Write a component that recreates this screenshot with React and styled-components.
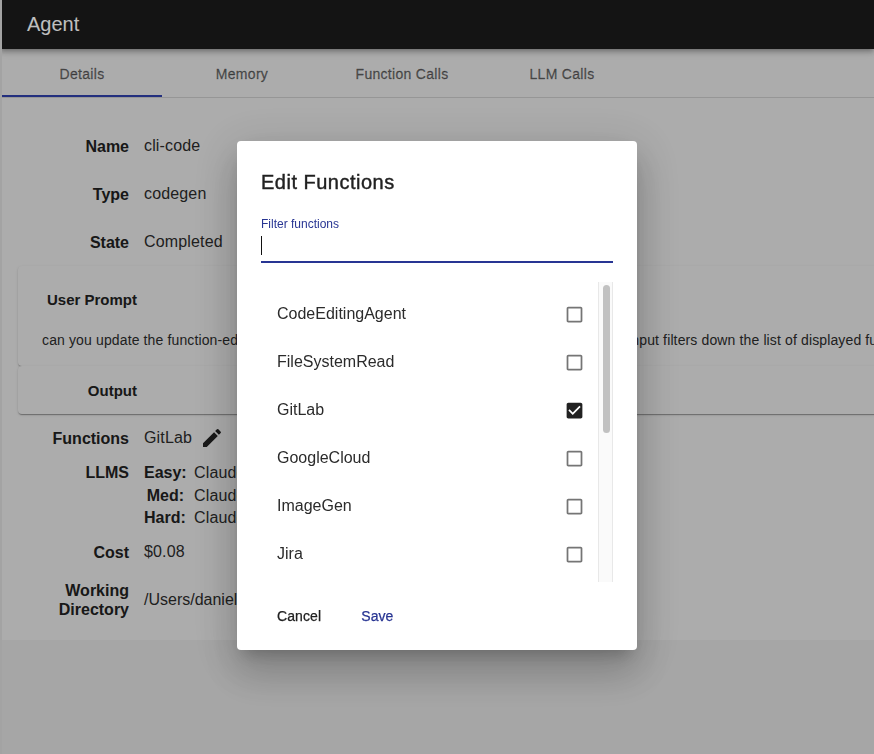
import React, { useState } from "react";
import styled, { createGlobalStyle } from "styled-components";

const FUNCTIONS = [
  "CodeEditingAgent",
  "FileSystemRead",
  "GitLab",
  "GoogleCloud",
  "ImageGen",
  "Jira",
  "Perplexity",
  "PublicWeb",
  "SlackAPI",
  "SupportRequest",
  "TypescriptTools",
  "UtilFunctions",
];

const PROMPT =
  "can you update the function-editing dialog so that it has a search box at the top and that text input filters down the list of displayed functions as the user types";

const GlobalStyle = createGlobalStyle`
  html, body {
    margin: 0;
    height: 100%;
    overflow: hidden;
    background: #dedede;
    font-family: "Liberation Sans", Arial, sans-serif;
    color: #212121;
  }
  * { box-sizing: border-box; }
`;

const Page = styled.div`
  width: 874px;
  height: 754px;
  overflow: hidden;
  border-left: 2px solid #dadada;
`;

const AppBar = styled.header`
  height: 49px;
  margin-left: -2px;
  padding-left: 27px;
  display: flex;
  align-items: center;
  background: #1b1b1b;
  color: #fff;
  font-size: 20px;
  box-shadow: 0 2px 4px -1px rgba(0, 0, 0, 0.2), 0 4px 5px 0 rgba(0, 0, 0, 0.14),
    0 1px 10px 0 rgba(0, 0, 0, 0.12);
  position: relative;

  &::before {
    content: "";
    position: absolute;
    top: 0;
    bottom: 0;
    left: 1px;
    width: 1px;
    background: #e6e6e6;
  }
`;

const TabBar = styled.nav`
  display: flex;
  height: 49px;
  background: #e6e6e6;
  border-bottom: 1px solid #c8c8c8;
`;

const Tab = styled.div`
  width: 160px;
  height: 48px;
  padding-top: 4px;
  display: flex;
  align-items: center;
  justify-content: center;
  font-size: 14px;
  letter-spacing: 0.3px;
  -webkit-text-stroke: 0.3px currentColor;
  color: rgba(0, 0, 0, 0.55);
  border-bottom: 2px solid ${(p) => (p.$active ? "#2f3fa8" : "transparent")};
`;

const Panel = styled.main`
  background: #e6e6e6;
  padding: 24px 0 16px;
`;

const Row = styled.div`
  display: flex;
  align-items: center;
  gap: 15px;
  min-height: 48px;
  font-size: 16px;
`;

const TopRow = styled(Row)`
  align-items: flex-start;
  min-height: 0;
`;

const Label = styled.div`
  width: 127px;
  flex: none;
  text-align: right;
  font-weight: 700;
  line-height: ${(p) => (p.$tier ? "22px" : "19px")};
`;

const Value = styled.div`
  display: flex;
  align-items: center;
  white-space: nowrap;
  letter-spacing: 0.15px;
  color: #2b2b2b;
`;

const PathValue = styled(Value)`
  letter-spacing: 0;
`;

const EditIcon = styled.svg`
  width: 24px;
  height: 24px;
  margin-left: 8px;
  fill: #212121;
`;

const Card = styled.section`
  margin-left: 16px;
  width: 900px;
  padding-top: ${(p) => (p.$expanded ? "9px" : "0")};
  background: #e6e6e6;
  border-radius: 4px;
  box-shadow: 0 2px 1px -1px rgba(0, 0, 0, 0.2), 0 1px 1px 0 rgba(0, 0, 0, 0.14),
    0 1px 3px 0 rgba(0, 0, 0, 0.12);
`;

const CardHeader = styled.div`
  height: 48px;
  width: 119px;
  display: flex;
  align-items: center;
  justify-content: flex-end;
  font-size: 15px;
  font-weight: 700;
`;

const CardBody = styled.div`
  height: 43px;
  padding: 7px 0 0 24px;
  font-size: 14px;
  line-height: 20px;
  letter-spacing: 0.13px;
  white-space: nowrap;
  color: #2b2b2b;
`;

const TierGrid = styled.div`
  display: grid;
  grid-template-columns: 40px auto;
  column-gap: 10px;
  grid-auto-rows: 22.5px;
  align-items: center;
  height: 66px;
`;

const TierName = styled.div`
  font-weight: 700;
  text-align: right;
`;

const Overlay = styled.div`
  position: fixed;
  inset: 0;
  display: flex;
  justify-content: center;
  padding-top: 141px;
  background: rgba(0, 0, 0, 0.25);
`;

const Dialog = styled.div`
  width: 400px;
  height: 509px;
  display: flex;
  flex-direction: column;
  background: #fff;
  border-radius: 4px;
  box-shadow: 0 11px 15px -7px rgba(0, 0, 0, 0.2), 0 24px 38px 3px rgba(0, 0, 0, 0.14),
    0 9px 46px 8px rgba(0, 0, 0, 0.12);
`;

const Title = styled.h2`
  margin: 0;
  padding: 29px 24px 0;
  font-size: 20px;
  line-height: 24px;
  font-weight: 400;
  letter-spacing: 0.5px;
  -webkit-text-stroke: 0.4px currentColor;
`;

const Filter = styled.label`
  display: block;
  position: relative;
  margin: 23px 24px 0;
  border-bottom: 2px solid #283593;
`;

const FilterLabel = styled.div`
  font-size: 12px;
  line-height: 14px;
  color: #283593;
`;

const FilterInput = styled.input`
  display: block;
  width: 100%;
  height: 28px;
  margin-top: 2px;
  padding: 0;
  border: 0;
  outline: 0;
  background: transparent;
  font: inherit;
  font-size: 16px;
  caret-color: transparent;
`;

// headless browsers hide the native caret and scrollbars, so both are drawn
const Caret = styled.span`
  position: absolute;
  left: 0;
  bottom: 6px;
  width: 1px;
  height: 19px;
  background: #111;
`;

const ListWrap = styled.div`
  display: flex;
  height: 300px;
  margin: 19px 24px 0;
`;

const List = styled.ul`
  flex: 1;
  margin: 0;
  padding: 8px 0;
  list-style: none;
  overflow-y: scroll;
  scrollbar-width: none;
`;

const ScrollTrack = styled.div`
  width: 15px;
  flex: none;
  padding: 3px 2px 0 4px;
  background: #fafafa;
  border-left: 1px solid #e8e8e8;
  border-right: 1px solid #e8e8e8;
`;

const ScrollThumb = styled.div`
  height: 148px;
  border-radius: 4px;
  background: #c1c1c1;
`;

const Item = styled.li`
  height: 48px;
  display: flex;
  align-items: center;
  justify-content: space-between;
  padding: 0 13px 0 16px;
  font-size: 16px;
  color: #2b2b2b;
  cursor: pointer;
`;

const CheckIcon = styled.svg`
  width: 21px;
  height: 21px;
  fill: ${(p) => (p.$checked ? "#212121" : "#757575")};
`;

const Actions = styled.div`
  display: flex;
  gap: 8px;
  margin-top: 16px;
  padding-left: 24px;
`;

const ActionButton = styled.button`
  height: 36px;
  padding: 0 16px;
  border: 0;
  background: none;
  font-family: inherit;
  font-size: 14px;
  letter-spacing: 0.1px;
  -webkit-text-stroke: 0.25px currentColor;
  color: ${(p) => (p.$primary ? "#283593" : "#212121")};
`;

const Checkbox = ({ checked }) => (
  <CheckIcon viewBox="0 0 24 24" $checked={checked}>
    {checked ? (
      <path d="M19 3H5c-1.11 0-2 .9-2 2v14c0 1.1.89 2 2 2h14c1.11 0 2-.9 2-2V5c0-1.1-.89-2-2-2zm-9 14l-5-5 1.41-1.41L10 14.17l7.59-7.59L19 8l-9 9z" />
    ) : (
      <path d="M19 5v14H5V5h14m0-2H5c-1.1 0-2 .9-2 2v14c0 1.1.9 2 2 2h14c1.1 0 2-.9 2-2V5c0-1.1-.9-2-2-2z" />
    )}
  </CheckIcon>
);

const App = () => {
  const [filter, setFilter] = useState("");
  const [selected, setSelected] = useState(["GitLab"]);
  const [scrollTop, setScrollTop] = useState(0);

  const toggle = (name) => {
    setSelected((prev) => (prev.includes(name) ? prev.filter((n) => n !== name) : [...prev, name]));
  };

  const visible = FUNCTIONS.filter((name) => name.toLowerCase().includes(filter.toLowerCase()));

  return (
    <>
      <GlobalStyle />
      <Page>
        <AppBar>Agent</AppBar>
        <TabBar>
          <Tab $active>Details</Tab>
          <Tab>Memory</Tab>
          <Tab>Function Calls</Tab>
          <Tab>LLM Calls</Tab>
        </TabBar>
        <Panel>
          <Row>
            <Label>Name</Label>
            <Value>cli-code</Value>
          </Row>
          <Row>
            <Label>Type</Label>
            <Value>codegen</Value>
          </Row>
          <Row>
            <Label>State</Label>
            <Value>Completed</Value>
          </Row>
          <Card $expanded>
            <CardHeader>User Prompt</CardHeader>
            <CardBody>{PROMPT}</CardBody>
          </Card>
          <Card>
            <CardHeader>Output</CardHeader>
          </Card>
          <Row>
            <Label>Functions</Label>
            <Value>
              GitLab
              <EditIcon viewBox="0 0 24 24">
                <path d="M3 17.25V21h3.75L17.81 9.94l-3.75-3.75L3 17.25zM20.71 7.04c.39-.39.39-1.02 0-1.41l-2.34-2.34a.9959.9959 0 0 0-1.41 0l-1.83 1.83 3.75 3.75 1.83-1.83z" />
              </EditIcon>
            </Value>
          </Row>
          <TopRow>
            <Label $tier>LLMS</Label>
            <TierGrid>
              <TierName>Easy:</TierName>
              <Value>Claude 3.5 Haiku</Value>
              <TierName>Med:</TierName>
              <Value>Claude 3.5 Sonnet</Value>
              <TierName>Hard:</TierName>
              <Value>Claude 3.5 Sonnet</Value>
            </TierGrid>
          </TopRow>
          <Row>
            <Label>Cost</Label>
            <Value>$0.08</Value>
          </Row>
          <Row>
            <Label>
              Working
              <br />
              Directory
            </Label>
            <PathValue>/Users/daniel/projects/cli-code</PathValue>
          </Row>
        </Panel>
      </Page>
      <Overlay>
        <Dialog>
          <Title>Edit Functions</Title>
          <Filter>
            <FilterLabel>Filter functions</FilterLabel>
            <FilterInput autoFocus value={filter} onChange={(e) => setFilter(e.target.value)} />
            {!filter && <Caret />}
          </Filter>
          <ListWrap>
            <List onScroll={(e) => setScrollTop(e.target.scrollTop)}>
              {visible.map((name) => (
                <Item key={name} onClick={() => toggle(name)}>
                  {name}
                  <Checkbox checked={selected.includes(name)} />
                </Item>
              ))}
            </List>
            <ScrollTrack>
              <ScrollThumb style={{ transform: `translateY(${scrollTop / 2}px)` }} />
            </ScrollTrack>
          </ListWrap>
          <Actions>
            <ActionButton>Cancel</ActionButton>
            <ActionButton $primary>Save</ActionButton>
          </Actions>
        </Dialog>
      </Overlay>
    </>
  );
};

export default App;
